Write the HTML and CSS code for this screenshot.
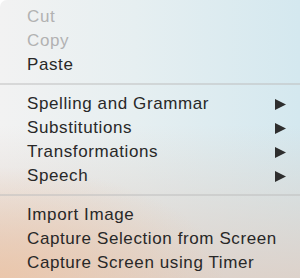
FILE: index.html
```html
<!DOCTYPE html>
<html>
  <head>
    <title>Context menu</title>
    <link rel="stylesheet" href="styles.css">
  </head>
  <body>
    <div class="menu">
      <div class="group">
        <div class="item disabled">Cut</div>
        <div class="item disabled">Copy</div>
        <div class="item">Paste</div>
      </div>
      <div class="sep"></div>
      <div class="group">
        <div class="item">Spelling and Grammar
          <svg class="arrow" width="11" height="11" viewBox="0 0 11 11"><polygon points="0,0 11,5.5 0,11"/></svg>
        </div>
        <div class="item">Substitutions
          <svg class="arrow" width="11" height="11" viewBox="0 0 11 11"><polygon points="0,0 11,5.5 0,11"/></svg>
        </div>
        <div class="item">Transformations
          <svg class="arrow" width="11" height="11" viewBox="0 0 11 11"><polygon points="0,0 11,5.5 0,11"/></svg>
        </div>
        <div class="item">Speech
          <svg class="arrow" width="11" height="11" viewBox="0 0 11 11"><polygon points="0,0 11,5.5 0,11"/></svg>
        </div>
      </div>
      <div class="sep"></div>
      <div class="group">
        <div class="item">Import Image</div>
        <div class="item">Capture Selection from Screen</div>
        <div class="item">Capture Screen using Timer</div>
      </div>
    </div>
  </body>
</html>
```

FILE: styles.css
```css
html, body {
  margin: 0;
  padding: 0;
  background: #ffffff;
}

.menu {
  width: 300px;
  height: 278px;
  box-sizing: border-box;
  border-top-left-radius: 7px;
  overflow: hidden;
  padding-top: 5px;
  font-family: "Liberation Sans", Arial, sans-serif;
  font-size: 17px;
  letter-spacing: 0.6px;
  color: #282828;
  background:
    radial-gradient(ellipse 75% 40% at 0% 100%, rgba(236, 196, 166, 0.85), rgba(236, 196, 166, 0) 100%),
    linear-gradient(to bottom, rgba(222, 206, 196, 0) 45%, rgba(222, 206, 196, 0.85) 100%),
    linear-gradient(to right, #f2f2f2 0%, #e6eff1 45%, #d4e8ef 100%);
}

.item {
  display: flex;
  align-items: center;
  justify-content: space-between;
  height: 24px;
  padding: 0 14px 0 27px;
}

.disabled {
  color: #b2b2b2;
}

.arrow {
  fill: #2e2e2e;
}

.sep {
  height: 2px;
  margin: 6px 0 7px;
  background: rgba(190, 190, 190, 0.5);
}
```
